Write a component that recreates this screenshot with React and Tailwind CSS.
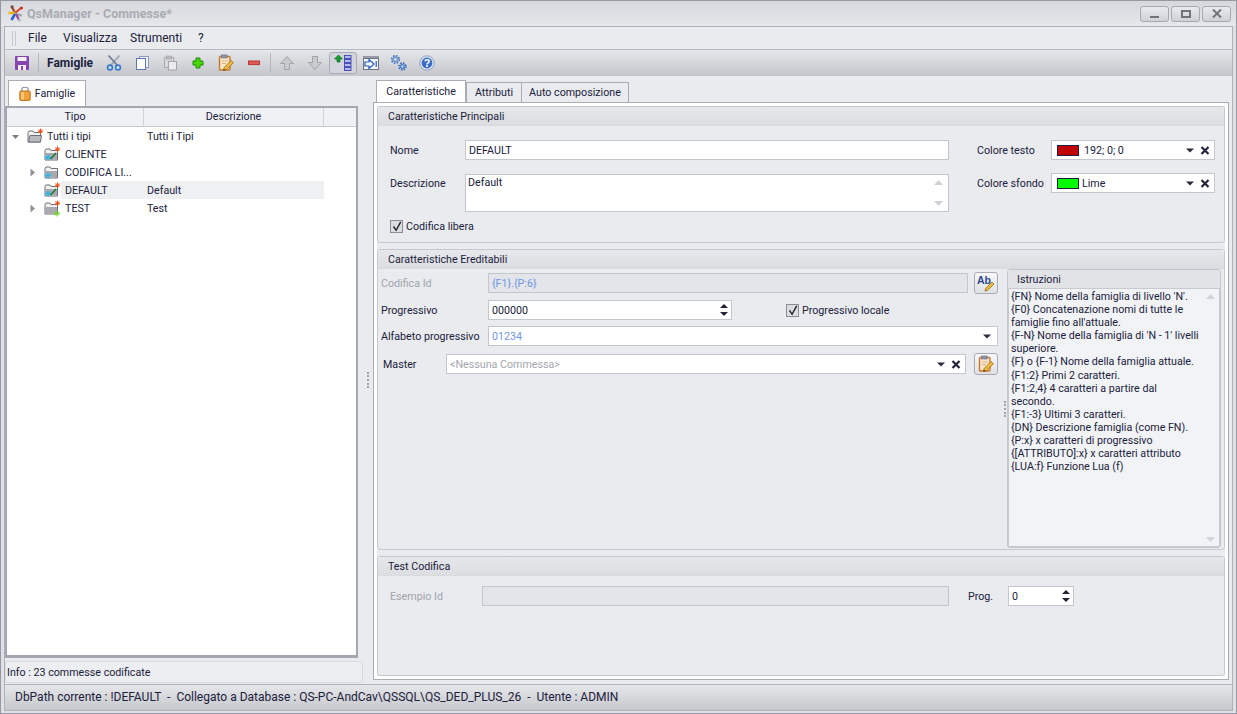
import { Fragment } from 'react'

const INSTRUCTIONS = [
  "{FN} Nome della famiglia di livello 'N'.",
  '{F0} Concatenazione nomi di tutte le',
  "famiglie fino all'attuale.",
  "{F-N} Nome della famiglia di 'N - 1' livelli",
  'superiore.',
  '{F} o {F-1} Nome della famiglia attuale.',
  '{F1:2} Primi 2 caratteri.',
  '{F1:2,4} 4 caratteri a partire dal',
  'secondo.',
  '{F1:-3} Ultimi 3 caratteri.',
  '{DN} Descrizione famiglia (come FN).',
  '{P:x} x caratteri di progressivo',
  '{[ATTRIBUTO]:x} x caratteri attributo',
  '{LUA:f} Funzione Lua (f)',
]

const TREE = [
  { name: 'Tutti i tipi', desc: 'Tutti i Tipi', level: 0, arrow: 'open', icon: 'open' },
  { name: 'CLIENTE', desc: '', level: 1, icon: 'pen' },
  { name: 'CODIFICA LI...', desc: '', level: 1, arrow: 'closed', icon: 'snow' },
  { name: 'DEFAULT', desc: 'Default', level: 1, icon: 'pen', selected: true },
  { name: 'TEST', desc: 'Test', level: 1, arrow: 'closed', icon: 'green' },
]

function Logo() {
  return (
    <svg width="17" height="17" viewBox="0 0 17 17">
      <path d="M8 8 5 2" stroke="#a04a30" strokeWidth="2.2" />
      <path d="M8 8 14 3" stroke="#d84a2c" strokeWidth="2.2" />
      <path d="M8 8 1.5 8" stroke="#eab818" strokeWidth="2.6" />
      <path d="M8 9 15 10.5" stroke="#a8a8b0" strokeWidth="2.4" />
      <path d="M8 9 4.5 15" stroke="#2f62c8" strokeWidth="2.6" />
      <path d="M9 9 12 15" stroke="#a04a9a" strokeWidth="2.2" />
      <circle cx="5" cy="1.8" r="1.6" fill="#7a4a3a" />
      <circle cx="14.5" cy="3" r="1.6" fill="#c83a2c" />
      <circle cx="12.5" cy="15" r="1.6" fill="#b8b8c0" />
    </svg>
  )
}

function SaveIcon() {
  return (
    <svg width="16" height="16" viewBox="0 0 16 16">
      <rect x="1" y="1" width="14" height="14" rx="1" fill="#8446ac" />
      <rect x="3.5" y="2" width="9" height="4" fill="#f4eef8" />
      <rect x="4" y="10" width="8" height="5" fill="#f4eef8" />
      <rect x="7" y="11" width="2" height="4" fill="#8446ac" />
    </svg>
  )
}

function ScissorsIcon() {
  return (
    <svg width="16" height="16" viewBox="0 0 16 16" fill="none">
      <path d="M13.5 .5 5 10" stroke="#97a1b2" strokeWidth="1.6" />
      <path d="M2.5 .5 11 10" stroke="#6b7790" strokeWidth="1.6" />
      <circle cx="4" cy="12.5" r="2.4" stroke="#3a78c8" strokeWidth="1.6" fill="#cfe2f6" />
      <circle cx="12" cy="12.5" r="2.4" stroke="#3a78c8" strokeWidth="1.6" fill="#cfe2f6" />
    </svg>
  )
}

function CopyIcon() {
  return (
    <svg width="16" height="16" viewBox="0 0 16 16">
      <rect x="5.5" y="1.5" width="9" height="11" fill="#eef2fa" stroke="#8d9cc0" />
      <rect x="2.5" y="3.5" width="9" height="11" fill="#ffffff" stroke="#5f77b0" />
    </svg>
  )
}

function PasteIcon() {
  return (
    <svg width="16" height="16" viewBox="0 0 16 16">
      <rect x="2.5" y="2.5" width="9" height="10" fill="#d8d9dc" stroke="#a8a9ad" />
      <rect x="4.5" y="1" width="5" height="3" fill="#bcbdc1" stroke="#a0a1a5" strokeWidth=".6" />
      <rect x="6.5" y="6.5" width="8" height="8.5" fill="#ececee" stroke="#a4a5a9" />
    </svg>
  )
}

function PlusIcon() {
  return (
    <svg width="16" height="16" viewBox="0 0 16 16">
      <path d="M6 3h4v3h3v4h-3v3H6v-3H3V6h3z" fill="#46d800" stroke="#1f8a10" />
    </svg>
  )
}

function NoteIcon() {
  return (
    <svg width="18" height="18" viewBox="0 0 18 18">
      <rect x="2.5" y="2.5" width="10.5" height="13.5" rx="1" fill="#fbe7c8" stroke="#c9782a" strokeWidth="1.4" />
      <rect x="4.5" y="1" width="5.5" height="3" fill="#8c95ad" stroke="#626b85" strokeWidth=".6" />
      <path d="M5 7h6M5 9.5h4" stroke="#d8b488" />
      <path d="m6.5 16.5.7-3L14 6.5l2.4 2.2-6.8 7z" fill="#f0b93a" stroke="#9a6a20" strokeWidth=".8" />
      <path d="m6.5 16.5.4-1.7 1.3 1.2z" fill="#222" />
    </svg>
  )
}

function MinusIcon() {
  return (
    <svg width="16" height="16" viewBox="0 0 16 16">
      <rect x="2.5" y="6" width="11" height="3.6" fill="#e05a5a" stroke="#b83838" />
    </svg>
  )
}

function UpIcon({ down }) {
  return (
    <svg width="16" height="16" viewBox="0 0 16 16">
      <path
        d={down ? 'M5.5 1.5h5v6h4L8 14.5 1.5 7.5h4z' : 'M5.5 14.5h5v-6h4L8 1.5 1.5 8.5h4z'}
        fill="#c9cacd"
        stroke="#a2a3a7"
      />
    </svg>
  )
}

function ListIcon() {
  return (
    <svg width="18" height="18" viewBox="0 0 18 18">
      <path d="M4.5 1 8.5 5H6v3H3V5H.5z" fill="#15a02a" stroke="#0b5c18" strokeWidth=".6" />
      {[1, 5, 9, 13].map((y) => (
        <rect key={y} x="10.5" y={y + 0.5} width="6.5" height="3" fill="#b4b8ea" stroke="#4a50b8" />
      ))}
    </svg>
  )
}

function ImportIcon() {
  return (
    <svg width="16" height="16" viewBox="0 0 16 16">
      <rect x=".5" y="1.5" width="15" height="3" fill="#9a9ca8" stroke="#7f8290" strokeWidth=".6" />
      <rect x=".5" y="3.5" width="15" height="11" fill="#f5f7fc" stroke="#6f7482" />
      <path d="M2 7h4V4.5L11 9l-5 4.5V11H2z" fill="#fff" stroke="#1f55c0" strokeWidth="1.2" />
      <rect x="12.5" y="6" width="1.5" height="6" fill="#4a7ad8" />
    </svg>
  )
}

function GearsIcon() {
  return (
    <svg width="18" height="18" viewBox="0 0 18 18" fill="none">
      <circle cx="5.5" cy="5.5" r="2.2" stroke="#6f9ad8" strokeWidth="1.6" />
      <circle cx="5.5" cy="5.5" r="3.8" stroke="#3c6fb8" strokeWidth="1.5" strokeDasharray="1.6 1.38" />
      <circle cx="12.5" cy="12.5" r="1.9" stroke="#4f88d0" strokeWidth="1.5" />
      <circle cx="12.5" cy="12.5" r="3.5" stroke="#2f68b8" strokeWidth="1.5" strokeDasharray="1.5 1.25" />
    </svg>
  )
}

function HelpIcon() {
  return (
    <svg width="16" height="16" viewBox="0 0 16 16" fill="none">
      <circle cx="8" cy="8" r="7.2" fill="#dfe6f4" stroke="#8fa0c4" />
      <circle cx="8" cy="8" r="5.4" fill="#3a6cc8" />
      <path d="M6 6.4C6.2 4.2 10.2 4.2 10.2 6.4 10.2 7.8 8 7.8 8 9.4" stroke="#fff" strokeWidth="1.5" />
      <rect x="7.1" y="10.2" width="1.8" height="1.8" fill="#fff" />
    </svg>
  )
}

function LockIcon() {
  return (
    <svg width="12" height="15" viewBox="0 0 12 15" fill="none">
      <path d="M3 6V2.5C3 .8 9 .8 9 2.5V6" stroke="#8b8f9c" strokeWidth="1.2" />
      <rect x=".8" y="5" width="10.4" height="9.4" rx="1" fill="#f2a238" stroke="#b9701c" />
      <rect x="2" y="6" width="3" height="7.4" fill="#f9c676" />
    </svg>
  )
}

function Star({ x, y, color, r = 2.6 }) {
  return (
    <g stroke={color} strokeWidth="1">
      <path d={`M${x - r} ${y}h${r * 2}M${x} ${y - r}v${r * 2}M${x - r * 0.7} ${y - r * 0.7}l${r * 1.4} ${r * 1.4}M${x + r * 0.7} ${y - r * 0.7}l${-r * 1.4} ${r * 1.4}`} />
    </g>
  )
}

function FolderIcon({ kind }) {
  return (
    <svg width="17" height="17" viewBox="0 0 17 17">
      <path d="M1 4.5 2 3h4l1 1.5h6.5V14H1z" fill="#f1f1f1" stroke="#6f7077" />
      {kind === 'open' && <path d="M1.5 14 3 7.5h11.5L13.5 14z" fill="#b9bac0" stroke="#6f7077" />}
      {kind !== 'open' && <rect x="1.5" y="7" width="11.5" height="6.5" fill="#a9aab0" />}
      {kind !== 'snow' && <Star x={13.5} y={3.2} color="#f04a10" />}
      {(kind === 'pen' || kind === 'snow') && <Star x={4} y={11.5} color="#22b8f0" r={3} />}
      {kind === 'pen' && <path d="M6.5 13 12 7" stroke="#167a2a" strokeWidth="1.4" />}
      {kind === 'green' && <Star x={13} y={13.5} color="#70d820" r={3} />}
    </svg>
  )
}

function Arrow({ open }) {
  return open ? (
    <svg width="7" height="7" viewBox="0 0 7 7"><path d="M0 2h7L3.5 6z" fill="#7d7f88" /></svg>
  ) : (
    <svg width="7" height="9" viewBox="0 0 7 9"><path d="M1.5 .5 6 4.5 1.5 8.5z" fill="#8f9199" /></svg>
  )
}

function Caret({ className = '' }) {
  return (
    <svg width="8" height="5" viewBox="0 0 8 5" className={className}><path d="M0 .5h8L4 4.5z" fill="#2a2b3f" /></svg>
  )
}

function ClearX() {
  return (
    <svg width="10" height="9" viewBox="0 0 10 9"><path d="M1.5 1 8.5 8M8.5 1 1.5 8" stroke="#23243a" strokeWidth="2.2" /></svg>
  )
}

function Spinner() {
  return (
    <div className="flex flex-col gap-[4px] items-center w-[14px]">
      <svg width="8" height="4" viewBox="0 0 8 4"><path d="M4 0 8 4H0z" fill="#23243a" /></svg>
      <svg width="8" height="4" viewBox="0 0 8 4"><path d="M0 0h8L4 4z" fill="#23243a" /></svg>
    </div>
  )
}

function ScrollTick({ down }) {
  return (
    <svg width="9" height="5" viewBox="0 0 9 5"><path d={down ? 'M0 0h9L4.5 5z' : 'M4.5 0 9 5H0z'} fill="#d0d2d8" /></svg>
  )
}

function Box({ className = '', children }) {
  return (
    <div className={`h-[20px] shrink-0 border border-[#c4c6cd] flex items-center px-[3px] ${className}`}>{children}</div>
  )
}

function IconButton({ children }) {
  return (
    <div className="w-[24px] h-[22px] shrink-0 ml-[6px] rounded-[3px] border border-[#a9abb4] bg-linear-to-b from-[#f8f8fa] to-[#dfe0e4] flex items-center justify-center">
      {children}
    </div>
  )
}

function Check() {
  return (
    <div className="w-[13px] h-[13px] border border-[#8b8d96] bg-[#dcdde1] flex items-center justify-center">
      <svg width="13" height="13" viewBox="0 0 13 13" fill="none"><path d="M3 6.5 6 11 11.5 1" stroke="#1c1c24" strokeWidth="1.6" /></svg>
    </div>
  )
}

function Group({ title, className = '', children }) {
  return (
    <section className={`rounded-[3px] border border-[#c6c8cf] flex flex-col ${className}`}>
      <div className="h-[19px] shrink-0 border-b border-[#d8dade] bg-linear-to-b from-[#e7e8eb] to-[#dcdde1] px-[10px] flex items-center">{title}</div>
      {children}
    </section>
  )
}

function WinButton({ children }) {
  return (
    <div className="w-[29px] h-[16px] rounded-[3px] border border-[#a6a8b2] bg-linear-to-b from-[#e9eaee] to-[#cfd1d6] flex items-center justify-center">
      {children}
    </div>
  )
}

function Dots() {
  return <div className="w-[2px] h-[16px] border-l-2 border-dotted border-[#a0a2ab]" />
}

function ToolSlot({ active, children }) {
  return (
    <div className={`w-[28px] h-[22px] shrink-0 flex items-center justify-center ${active ? 'rounded-[3px] border border-[#a9abb6] bg-[#d3d5dc]' : ''}`}>
      {children}
    </div>
  )
}

function Toolbar() {
  return (
    <div className="h-[26px] shrink-0 bg-linear-to-b from-[#e6e7ea] to-[#c4c6cb] flex items-center pl-[3px]">
      <ToolSlot><SaveIcon /></ToolSlot>
      <div className="w-px h-[20px] ml-[2px] bg-[#b4b6bc]" />
      <span className="ml-[8px] w-[53px] font-bold text-[12px] text-[#1c2340]">Famiglie</span>
      <ToolSlot><ScissorsIcon /></ToolSlot>
      <ToolSlot><CopyIcon /></ToolSlot>
      <ToolSlot><PasteIcon /></ToolSlot>
      <ToolSlot><PlusIcon /></ToolSlot>
      <ToolSlot><NoteIcon /></ToolSlot>
      <ToolSlot><MinusIcon /></ToolSlot>
      <div className="w-px h-[20px] ml-[2px] mr-[2px] bg-[#b4b6bc]" />
      <ToolSlot><UpIcon /></ToolSlot>
      <ToolSlot><UpIcon down /></ToolSlot>
      <ToolSlot active><ListIcon /></ToolSlot>
      <ToolSlot><ImportIcon /></ToolSlot>
      <ToolSlot><GearsIcon /></ToolSlot>
      <ToolSlot><HelpIcon /></ToolSlot>
    </div>
  )
}

function TreeRow({ row }) {
  return (
    <div className="h-[18px] flex items-center">
      <div className={`flex items-center h-full w-[137px] ${row.level ? 'pl-[20px]' : 'pl-[3px]'}`}>
        <div className="w-[11px] mr-[6px] flex justify-center shrink-0">
          {row.arrow && <Arrow open={row.arrow === 'open'} />}
        </div>
        <div className="w-[17px] shrink-0 flex items-center"><FolderIcon kind={row.icon} /></div>
        <span className={`h-full flex-1 flex items-center whitespace-nowrap ${row.level ? 'pl-[4px]' : 'pl-[3px]'} ${row.selected ? 'bg-[#eff0f2]' : ''}`}>{row.name}</span>
      </div>
      <span className={`w-[180px] h-full pl-[3px] flex items-center ${row.selected ? 'bg-[#eff0f2]' : ''}`}>{row.desc}</span>
    </div>
  )
}

function LeftPanel() {
  return (
    <div className="w-[358px] shrink-0 flex flex-col pt-[4px]">
      <div className="h-[26px] shrink-0 pl-[3px] flex">
        <div className="w-[78px] bg-white border border-b-0 border-[#a9abb5] flex items-center justify-center gap-[4px]">
          <LockIcon />
          <span>Famiglie</span>
        </div>
      </div>
      <div className="flex-1 mr-[5px] border-2 border-[#a4a6b0] border-b-[3px] bg-white flex flex-col">
        <div className="h-[19px] shrink-0 border-b border-[#c9cbd1] bg-[#f0f1f4] flex text-center">
          <div className="w-[137px] border-r border-[#d0d2d8] leading-[18px]">Tipo</div>
          <div className="w-[180px] border-r border-[#d0d2d8] leading-[18px]">Descrizione</div>
        </div>
        <div>
          {TREE.map((row) => <TreeRow key={row.name} row={row} />)}
        </div>
      </div>
      <div className="h-[22px] shrink-0 mt-[3px] mb-px rounded-[3px] border border-[#d7d9de] bg-[#eceef1] pl-[1px] flex items-center">
        Info : 23 commesse codificate
      </div>
    </div>
  )
}

function PrincipalGroup() {
  return (
    <Group title="Caratteristiche Principali" className="h-[137px] shrink-0">
      <div className="flex pl-[12px] pt-[14px]">
        <div className="w-[559px] shrink-0">
          <div className="flex items-center">
            <span className="w-[75px]">Nome</span>
            <Box className="w-[484px] bg-white">DEFAULT</Box>
          </div>
          <div className="flex mt-[14px]">
            <span className="w-[75px] pt-[3px]">Descrizione</span>
            <div className="w-[484px] h-[38px] border border-[#c4c6cd] bg-white flex justify-between pl-[2px] pr-[5px]">
              <span className="pt-px leading-[14px]">Default</span>
              <div className="flex flex-col justify-between py-[5px]"><ScrollTick /><ScrollTick down /></div>
            </div>
          </div>
          <div className="flex items-center gap-[3px] mt-[8px]">
            <Check />
            <span>Codifica libera</span>
          </div>
        </div>
        <div className="w-[238px] ml-[28px] shrink-0">
          <div className="flex items-center">
            <span className="w-[74px] whitespace-nowrap">Colore testo</span>
            <Box className="w-[164px] bg-white pl-[5px] pr-[4px]">
              <div className="w-[22px] h-[11px] border border-[#1e1e40] bg-[#c00000] mr-[5px]" />
              <span className="flex-1">192; 0; 0</span>
              <Caret className="mr-[6px]" /><ClearX />
            </Box>
          </div>
          <div className="flex items-center mt-[13px]">
            <span className="w-[74px] whitespace-nowrap">Colore sfondo</span>
            <Box className="w-[164px] bg-white pl-[5px] pr-[4px]">
              <div className="w-[22px] h-[11px] border border-[#1e1e40] bg-[#00ff00] mr-[3px]" />
              <span className="flex-1">Lime</span>
              <Caret className="mr-[6px]" /><ClearX />
            </Box>
          </div>
        </div>
      </div>
    </Group>
  )
}

function InheritGroup() {
  return (
    <Group title="Caratteristiche Ereditabili" className="flex-1 min-h-0">
      <div className="flex flex-1 min-h-0">
        <div className="w-[625px] shrink-0 pl-[3px] pt-[4px]">
          <div className="flex items-center h-[20px]">
            <span className="w-[107px] text-[#a2a4ad]">Codifica Id</span>
            <Box className="w-[480px] bg-[#e3e5ea] text-[#6f97e6]">{'{F1}.{P:6}'}</Box>
            <IconButton>
              <svg width="20" height="18" viewBox="0 0 20 18">
                <text x="1" y="10" fontSize="10.5" fontWeight="700" fontFamily="Liberation Sans" fill="#2c4a8c">Ab</text>
                <path d="m9 17 .6-2.5L16 8l2 2-6.4 6.4z" fill="#f0b93a" stroke="#8a5f1c" strokeWidth=".7" />
              </svg>
            </IconButton>
          </div>
          <div className="flex items-center mt-[7px] h-[20px]">
            <span className="w-[107px]">Progressivo</span>
            <Box className="w-[244px] bg-white pr-0 justify-between"><span>000000</span><Spinner /></Box>
            <div className="ml-[54px] flex items-center gap-[3px]">
              <Check />
              <span>Progressivo locale</span>
            </div>
          </div>
          <div className="flex items-center mt-[6px] h-[20px]">
            <span className="w-[107px] whitespace-nowrap">Alfabeto progressivo</span>
            <Box className="w-[510px] bg-white pr-[6px] justify-between text-[#6f97e6]"><span>01234</span><Caret /></Box>
          </div>
          <div className="flex items-center mt-[8px] h-[20px] pl-[2px]">
            <span className="w-[63px]">Master</span>
            <Box className="w-[520px] bg-white pr-[4px] text-[#a4a6ae]">
              <span className="flex-1">{'<Nessuna Commessa>'}</span>
              <Caret className="mr-[6px]" /><ClearX />
            </Box>
            <div className="ml-[2px]">
              <IconButton><NoteIcon /></IconButton>
            </div>
          </div>
        </div>
        <div className="w-[4px] shrink-0 flex items-center justify-center"><Dots /></div>
        <div className="w-[214px] shrink-0 mb-px rounded-[3px] border border-[#c4c6cd] flex flex-col">
          <div className="h-[18px] shrink-0 bg-[#e2e3e7] pl-[9px] flex items-center">Istruzioni</div>
          <div className="flex-1 border border-[#c8cad0] bg-[#f2f3f6] pl-[2px] pr-[4px] pt-px flex justify-between">
            <div className="leading-[13.1px] whitespace-nowrap">
              {INSTRUCTIONS.map((line) => <Fragment key={line}>{line}<br /></Fragment>)}
            </div>
            <div className="flex flex-col justify-between py-[4px]"><ScrollTick /><ScrollTick down /></div>
          </div>
        </div>
      </div>
    </Group>
  )
}

function TestGroup() {
  return (
    <Group title="Test Codifica" className="h-[120px] shrink-0">
      <div className="flex items-center pl-[12px] pt-[10px]">
        <span className="w-[92px] text-[#a2a4ad]">Esempio Id</span>
        <Box className="w-[467px] bg-[#e3e5ea]" />
        <span className="ml-[19px] w-[40px]">Prog.</span>
        <Box className="w-[66px] bg-white pr-0 justify-between"><span>0</span><Spinner /></Box>
      </div>
    </Group>
  )
}

function RightPanel() {
  return (
    <div className="flex-1 min-w-0 flex flex-col pt-[5px] pr-[3px] pb-[4px]">
      <div className="h-[21px] shrink-0 flex items-end pl-[3px]">
        <div className="w-[90px] h-[22px] bg-white border border-b-0 border-[#a9abb5] flex items-center justify-center">Caratteristiche</div>
        <div className="w-[56px] h-[20px] border border-b-0 border-[#a9abb5] flex items-center justify-center">Attributi</div>
        <div className="w-[107px] h-[20px] border border-b-0 border-l-0 border-[#a9abb5] flex items-center justify-center">Auto composizione</div>
      </div>
      <div className="flex-1 min-h-0 border border-[#a9abb5] bg-white p-[3px]">
        <div className="h-full bg-[#e9ebef] flex flex-col gap-[6px]">
          <PrincipalGroup />
          <InheritGroup />
          <TestGroup />
        </div>
      </div>
    </div>
  )
}

export default function App() {
  return (
    <div className="w-[1237px] h-[714px] flex flex-col overflow-hidden border border-[#9699a4] bg-[#dfe1e6] text-[10.7px] leading-[13px] text-[#20213c] font-['Roboto',sans-serif]">
      <div className="h-[25px] shrink-0 bg-linear-to-b from-[#d6d8dd] to-[#e6e7eb] flex items-center pl-[6px] pr-[5px]">
        <Logo />
        <span className="ml-[3px] flex-1 font-bold text-[12.5px] text-[#a9abb3]">QsManager - Commesse*</span>
        <div className="flex gap-[2px]">
          <WinButton><div className="w-[9px] h-[2px] mt-[6px] bg-[#70727c]" /></WinButton>
          <WinButton><div className="w-[10px] h-[8px] border-2 border-[#70727c]" /></WinButton>
          <WinButton>
            <svg width="10" height="9" viewBox="0 0 10 9"><path d="M1 .5 9 8.5M9 .5 1 8.5" stroke="#70727c" strokeWidth="2" /></svg>
          </WinButton>
        </div>
      </div>
      <div className="flex-1 min-h-0 mx-[3px] mb-[2px] border border-[#aeb0b9] bg-[#e9ebef] flex flex-col">
        <div className="h-[23px] shrink-0 border-b border-[#b9bbc3] flex items-center pl-[7px] text-[12px]">
          <div className="w-[4px] h-[15px] border-x border-[#c6c8cf]" />
          <div className="flex ml-[12px]">
            <span className="w-[35px]">File</span>
            <span className="w-[67px]">Visualizza</span>
            <span className="w-[68px]">Strumenti</span>
            <span>?</span>
          </div>
        </div>
        <Toolbar />
        <div className="flex-1 min-h-0 flex">
          <LeftPanel />
          <div className="w-[10px] shrink-0 flex items-center justify-center"><Dots /></div>
          <RightPanel />
        </div>
        <div className="h-[26px] shrink-0 border-t border-[#b0b2ba] bg-linear-to-b from-[#e6e7ea] to-[#c6c8cd] pl-[10px] flex items-center whitespace-pre text-[12px]">
          {'DbPath corrente : !DEFAULT  -  Collegato a Database : QS-PC-AndCav\\QSSQL\\QS_DED_PLUS_26  -  Utente : ADMIN'}
        </div>
      </div>
    </div>
  )
}
